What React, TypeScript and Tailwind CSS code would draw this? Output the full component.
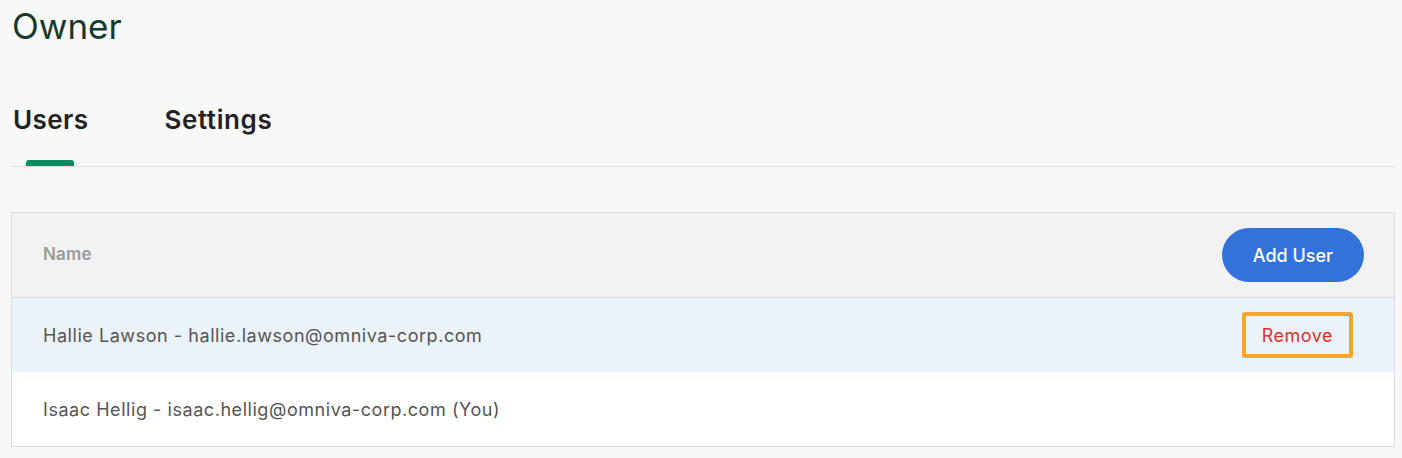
import { useState } from 'react';

type Tab = 'users' | 'settings';

interface User {
  name: string;
  email: string;
  you?: boolean;
}

const users: User[] = [
  { name: 'Hallie Lawson', email: 'hallie.lawson@omniva-corp.com' },
  { name: 'Isaac Hellig', email: 'isaac.hellig@omniva-corp.com', you: true },
];

function App() {
  const [tab, setTab] = useState<Tab>('users');

  return (
    <div className="min-h-screen bg-[#f8f8f8] pl-[11px] pr-[7px] pb-3 font-['Inter',sans-serif]">
      <h1 className="pl-[1px] pt-[4px] text-[35px] leading-[44px] text-[#17392b]">Owner</h1>

      <div className="mt-[57px] flex gap-[76px] border-b border-[#dcdcdc] pl-[2px]">
        <button
          className="relative pb-[31px] text-[26px] font-semibold leading-[30px] tracking-[0.4px] text-[#222]"
          onClick={() => setTab('users')}
        >
          Users
          {tab === 'users' && (
            <span className="absolute bottom-0 left-[13px] h-[6px] w-[48px] rounded-t-[3px] bg-[#0b8a5e]" />
          )}
        </button>
        <button
          className="relative pb-[31px] text-[26px] font-semibold leading-[30px] tracking-[0.6px] text-[#222]"
          onClick={() => setTab('settings')}
        >
          Settings
          {tab === 'settings' && (
            <span className="absolute bottom-0 left-[13px] h-[6px] w-[48px] rounded-t-[3px] bg-[#0b8a5e]" />
          )}
        </button>
      </div>

      <div className="mt-[45px] border border-[#dcdcdc] bg-white">
        <div className="flex h-[85px] items-center justify-between border-b border-[#dcdcdc] bg-[#f2f2f2] pl-[31px] pr-[30px]">
          <span className="text-[17px] font-semibold tracking-[0.2px] text-[#9a9a9a]">Name</span>
          <button className="h-[54px] rounded-full bg-[#3373d9] px-[31px] text-[18px] font-medium text-white">
            Add User
          </button>
        </div>
        {users.map((user, index) => (
          <div
            key={user.email}
            className={
              'flex h-[74px] items-center justify-between pl-[31px] pr-[41px] ' +
              (index === 0 ? 'bg-[#ebf2fa]' : 'bg-white')
            }
          >
            <span className="text-[18px] tracking-[0.55px] text-[#555]">
              {user.name} - {user.email}
              {user.you ? ' (You)' : ''}
            </span>
            {!user.you && (
              <button className="h-[46px] rounded-[3px] border-[4px] border-[#f5a52a] px-[16px] text-[18px] tracking-[0.5px] text-[#d9322b]">
                Remove
              </button>
            )}
          </div>
        ))}
      </div>
    </div>
  );
}

export default App;
